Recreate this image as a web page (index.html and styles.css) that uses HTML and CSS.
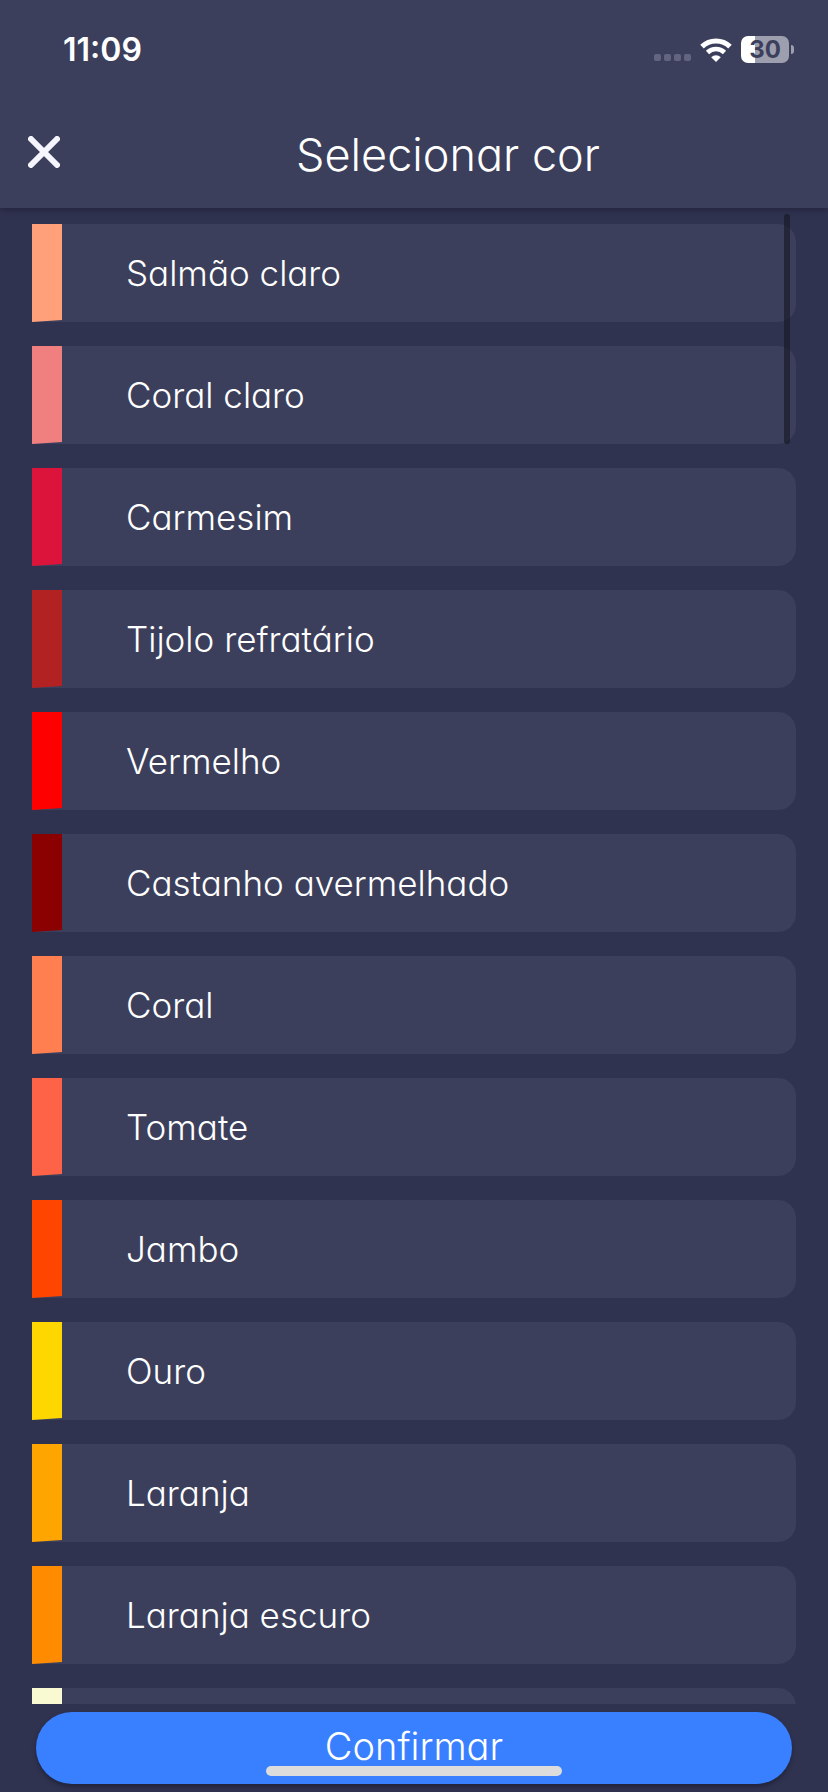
FILE: index.html
```html
<!DOCTYPE html>
<html lang="pt">
<head>
    <meta charset="UTF-8">
    <meta name="viewport" content="width=device-width, initial-scale=1.0">
    <title>Selecionar cor</title>
    <link rel="stylesheet" href="styles.css">
</head>
<body>
  <header class="header">
    <div class="status-bar">
      <span class="time">11:09</span>
      <div class="status-icons">
        <svg class="signal" viewBox="0 0 37 7" aria-hidden="true">
          <rect x="0" width="7" height="7" rx="2"/>
          <rect x="10" width="7" height="7" rx="2"/>
          <rect x="20" width="7" height="7" rx="2"/>
          <rect x="30" width="7" height="7" rx="2"/>
        </svg>
        <svg class="wifi" viewBox="0 0 32 24" aria-hidden="true">
          <path d="M2 8.600A20 20 0 0 1 30 8.600" fill="none" stroke="#fff" stroke-width="5"/>
          <path d="M7.500 14.500A12.200 12.200 0 0 1 24.500 14.500" fill="none" stroke="#fff" stroke-width="4.600"/>
          <path d="M11.200 19.200A7 7 0 0 1 20.800 19.200L16 24Z" fill="#fff"/>
        </svg>
        <span class="battery">30</span>
      </div>
    </div>
    <div class="title-bar">
      <button class="close" type="button" aria-label="Fechar">
        <svg viewBox="0 0 32 32" aria-hidden="true">
          <path d="M3 3L29 29M29 3L3 29" fill="none" stroke="#f4f5ff" stroke-width="6" stroke-linecap="round"/>
        </svg>
      </button>
      <h1 class="title">Selecionar cor</h1>
    </div>
  </header>

  <main class="content">
    <ul class="color-list">
      <li><button class="color" type="button"><span class="swatch salmao"></span>Salmão claro</button></li>
      <li><button class="color" type="button"><span class="swatch coral-claro"></span>Coral claro</button></li>
      <li><button class="color" type="button"><span class="swatch carmesim"></span>Carmesim</button></li>
      <li><button class="color" type="button"><span class="swatch tijolo"></span>Tijolo refratário</button></li>
      <li><button class="color" type="button"><span class="swatch vermelho"></span>Vermelho</button></li>
      <li><button class="color" type="button"><span class="swatch castanho"></span>Castanho avermelhado</button></li>
      <li><button class="color" type="button"><span class="swatch coral"></span>Coral</button></li>
      <li><button class="color" type="button"><span class="swatch tomate"></span>Tomate</button></li>
      <li><button class="color" type="button"><span class="swatch jambo"></span>Jambo</button></li>
      <li><button class="color" type="button"><span class="swatch ouro"></span>Ouro</button></li>
      <li><button class="color" type="button"><span class="swatch laranja"></span>Laranja</button></li>
      <li><button class="color" type="button"><span class="swatch laranja-escuro"></span>Laranja escuro</button></li>
      <li><button class="color" type="button" aria-label="Amarelo claro"><span class="swatch amarelo"></span></button></li>
    </ul>
    <div class="scroll-thumb"></div>
  </main>

  <footer class="footer">
    <button class="confirm" type="button">Confirmar</button>
    <div class="home-indicator"></div>
  </footer>
</body>
</html>
```

FILE: styles.css
```css
* {
    box-sizing: border-box;
}

body {
    margin: 0;
    height: 100vh;
    display: flex;
    flex-direction: column;
    background-color: #303350;
    color: #fff;
    font-family: Inter, "Liberation Sans", sans-serif;
    font-weight: 300;
    font-feature-settings: "cv11"; /* single-storey a */
}

button {
    margin: 0;
    padding: 0;
    border: none;
    background: none;
    color: inherit;
    font: inherit;
    font-feature-settings: inherit;
    cursor: pointer;
}

/* header */
.header {
    position: relative;
    z-index: 1;
    background-color: #3c3f5b;
    box-shadow: 0 3px 6px rgba(30, 31, 54, 0.6);
}

.status-bar {
    height: 99px;
    padding: 0 34px 0 63px;
    display: flex;
    align-items: center;
    justify-content: space-between;
}

.time {
    font-size: 32px;
    font-weight: 600;
}

.status-icons {
    display: flex;
    align-items: center;
    gap: 9px;
}

.signal {
    width: 37px;
    height: 7px;
    margin-top: 16px;
    fill: #636580;
}

.wifi {
    width: 32px;
    height: 24px;
}

.battery {
    position: relative;
    width: 48px;
    height: 27px;
    margin-right: 5px;
    border-radius: 7px;
    background: linear-gradient(to right, #fff 14px, #9d9eae 14px);
    color: #3c3f5b;
    font-size: 24px;
    line-height: 27px;
    font-weight: 700;
    text-align: center;
}

.battery::after {
    content: "";
    position: absolute;
    right: -5px;
    top: 9px;
    width: 3px;
    height: 9px;
    border-radius: 0 4px 4px 0;
    background-color: #9d9eae;
}

.title-bar {
    height: 109px;
    padding-left: 28px;
    display: flex;
    align-items: center;
}

.close {
    width: 32px;
    height: 32px;
    margin-bottom: 3px;
}

.close svg {
    display: block;
}

.title {
    flex: 1;
    margin: 0;
    padding: 2px 0 0 8px;
    font-size: 45px;
    line-height: 56px;
    font-weight: 300;
    text-align: center;
}

/* color list */
.content {
    position: relative;
    flex: 1;
    min-height: 0;
}

.color-list {
    height: 100%;
    margin: 0;
    padding: 16px 32px 0;
    display: flex;
    flex-direction: column;
    gap: 24px;
    overflow-y: auto;
    scrollbar-width: none;
    list-style: none;
}

.color {
    width: 100%;
    height: 98px;
    display: flex;
    align-items: center;
    gap: 64px;
    border-radius: 0 18px 18px 0;
    background-color: #3c3f5b;
    font-size: 35px;
    line-height: 40px;
    text-align: left;
}

.swatch {
    width: 30px;
    height: 98px;
    clip-path: polygon(0 0, 100% 0, 100% 96px, 0 100%);
}

.salmao { background-color: #ffa07a; }
.coral-claro { background-color: #f08080; }
.carmesim { background-color: #dc143c; }
.tijolo { background-color: #b22222; }
.vermelho { background-color: #ff0000; }
.castanho { background-color: #8b0000; }
.coral { background-color: #ff7f50; }
.tomate { background-color: #ff6347; }
.jambo { background-color: #ff4500; }
.ouro { background-color: #ffd700; }
.laranja { background-color: #ffa500; }
.laranja-escuro { background-color: #ff8c00; }
.amarelo { background-color: #fafad2; }

.scroll-thumb {
    position: absolute;
    top: 6px;
    right: 38px;
    width: 6px;
    height: 230px;
    border-radius: 3px;
    background-color: rgba(20, 22, 34, 0.6);
}

/* footer */
.footer {
    position: relative;
    padding: 8px 36px;
}

.confirm {
    display: block;
    width: 100%;
    height: 72px;
    padding-bottom: 4px;
    border-radius: 36px;
    background-color: #3880ff;
    box-shadow: 0 3px 4px rgba(20, 22, 40, 0.5);
    font-size: 38px;
    line-height: 40px;
}

.home-indicator {
    position: absolute;
    left: 50%;
    bottom: 16px;
    width: 296px;
    height: 10px;
    margin-left: -148px;
    border-radius: 5px;
    background-color: #dcdcdc;
}
```
